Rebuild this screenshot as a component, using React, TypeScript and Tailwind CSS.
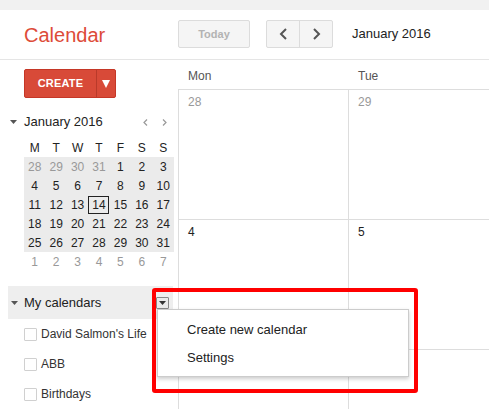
const prevDays = [28, 29, 30, 31];

function Tri({ className = '' }: { className?: string }) {
  return (
    <svg width="7" height="4" viewBox="0 0 7 4" className={className}>
      <path d="M0 0h7L3.5 4z" fill="currentColor" />
    </svg>
  );
}

function Chevron({ dir, size = 'lg' }: { dir: 'l' | 'r'; size?: 'lg' | 'sm' }) {
  if (size === 'sm') {
    return (
      <svg width="5" height="7" viewBox="0 0 5 7" className="text-[#999]">
        <path d={dir === 'l' ? 'M4 0.5L1 3.5L4 6.5' : 'M1 0.5L4 3.5L1 6.5'} stroke="currentColor" strokeWidth="1.2" fill="none" />
      </svg>
    );
  }
  return (
    <svg width="9" height="12" viewBox="0 0 9 12" className="text-[#555]">
      <path d={dir === 'l' ? 'M7 1L2 6L7 11' : 'M2 1L7 6L2 11'} stroke="currentColor" strokeWidth="2" fill="none" />
    </svg>
  );
}

function MiniCal() {
  // 6 weeks, Mon-first, Jan 2016
  const cells: { d: number; muted: boolean }[] = [];
  prevDays.forEach((d) => cells.push({ d, muted: true }));
  for (let d = 1; d <= 31; d++) cells.push({ d, muted: false });
  for (let d = 1; cells.length < 42; d++) cells.push({ d, muted: true });
  const weeks = Array.from({ length: 6 }, (_, i) => cells.slice(i * 7, i * 7 + 7));

  return (
    <div className="ml-[24px] w-[150px] text-[12px] leading-[14px]">
      <div className="grid h-[19px] grid-cols-7 items-center text-center text-[#222]">
        {['M', 'T', 'W', 'T', 'F', 'S', 'S'].map((l, i) => (
          <span key={i}>{l}</span>
        ))}
      </div>
      {weeks.map((w, wi) => (
        <div key={wi} className={`grid h-[19px] grid-cols-7 items-center text-center ${wi < 5 ? 'bg-[#ebebeb]' : ''}`}>
          {w.map((c, ci) => (
            <span key={ci} className="flex justify-center">
              {c.d === 14 && !c.muted ? (
                <span className="flex h-[18px] w-[21px] items-center justify-center border border-[#222]">{c.d}</span>
              ) : (
                <span className={c.muted ? 'text-[#999]' : 'text-[#222]'}>{c.d}</span>
              )}
            </span>
          ))}
        </div>
      ))}
    </div>
  );
}

// week rows of the month grid; the third row sits under the popup
const gridRows: { d: number | null; muted: boolean }[][] = [
  [
    { d: 28, muted: true },
    { d: 29, muted: true },
  ],
  [
    { d: 4, muted: false },
    { d: 5, muted: false },
  ],
  [
    { d: null, muted: false },
    { d: null, muted: false },
  ],
];

export default function App() {
  return (
    <div className="relative h-[409px] w-[489px] overflow-hidden bg-white font-['Liberation_Sans',Arial,sans-serif] text-[#222]">
      <div className="h-[10px] bg-[#f1f1f1]" />

      <header className="flex h-[50px] items-start border-b border-[#e5e5e5]">
        <div className="w-[178px] pl-[24px] pt-[13px] text-[20px] leading-[24px] text-[#dd4b39]">Calendar</div>
        <div className="mt-[10px] flex h-[28px] items-center">
          <div className="flex h-[28px] w-[72px] items-center justify-center rounded-[2px] border border-[#dcdcdc] bg-[#f5f5f5] text-[11px] font-bold text-[#b3b3b3]">
            Today
          </div>
          <div className="ml-[16px] flex h-[28px] w-[67px] rounded-[2px] border border-[#dcdcdc] bg-[#f5f5f5]">
            <div className="flex w-[33px] items-center justify-center border-r border-[#dcdcdc]">
              <Chevron dir="l" />
            </div>
            <div className="flex flex-1 items-center justify-center">
              <Chevron dir="r" />
            </div>
          </div>
          <div className="ml-[19px] text-[13px] text-[#222]">January 2016</div>
        </div>
      </header>

      <div className="flex">
        <aside className="w-[178px] shrink-0">
          <div className="ml-[24px] mt-[9px] flex h-[29px] w-[92px] rounded-[2px] border border-[#c53727] bg-[#d84a38] text-white">
            <div className="flex w-[71px] items-center justify-center text-[11px] font-bold tracking-[0.2px]">CREATE</div>
            <div className="w-px bg-[#b93a2a]" />
            <div className="flex flex-1 items-center justify-center">
              <svg width="8" height="8" viewBox="0 0 8 8">
                <path d="M0 0h8L4 8z" fill="white" />
              </svg>
            </div>
          </div>

          <div className="relative mt-[16px] flex h-[16px] items-center">
            <Tri className="ml-[10px] mr-[7px] text-[#555]" />
            <span className="text-[13px] leading-[16px]">January 2016</span>
            <div className="ml-auto mr-[11px] flex items-center gap-[14px]">
              <Chevron dir="l" size="sm" />
              <Chevron dir="r" size="sm" />
            </div>
          </div>

          <div className="mt-[8px]">
            <MiniCal />
          </div>

          <div className="ml-[8px] mt-[15px] flex h-[33px] w-[165px] items-center bg-[#eeeeee]">
            <Tri className="ml-[3px] mr-[6px] text-[#555]" />
            <span className="text-[13px]">My calendars</span>
            <div className="ml-auto mr-[4px] flex h-[12px] w-[13px] items-center justify-center rounded-[1px] border border-[#888] bg-[#eaeaea]">
              <Tri className="text-[#333]" />
            </div>
          </div>

          {["David Salmon's Life", 'ABB', 'Birthdays'].map((c) => (
            <div key={c} className="flex h-[30px] items-center pl-[24px] text-[12px] text-[#333]">
              <span className="h-[13px] w-[13px] rounded-[1px] border border-[#d0d0d0] bg-white" />
              <span className="ml-[4px] whitespace-nowrap">{c}</span>
            </div>
          ))}
        </aside>

        <main className="flex-1 overflow-hidden">
          <div className="flex h-[29px] text-[12px] leading-[14px] text-[#555]">
            <div className="w-[170px] shrink-0 pl-[10px] pt-[9px]">Mon</div>
            <div className="w-[170px] shrink-0 pl-[10px] pt-[9px]">Tue</div>
          </div>
          {gridRows.map((row, ri) => (
            <div key={ri} className="flex">
              {row.map((c, ci) => (
                <div
                  key={ci}
                  className={`h-[130px] w-[170px] shrink-0 border-l border-t border-[#dddddd] pl-[9px] pt-[5px] text-[12px] leading-[14px] ${c.muted ? 'text-[#999]' : 'text-[#222]'}`}
                >
                  {c.d}
                </div>
              ))}
            </div>
          ))}
        </main>
      </div>

      <div className="absolute left-[157px] top-[309px] h-[68px] w-[252px] border border-[#cccccc] bg-white pt-[6px] shadow-[0_2px_4px_rgba(0,0,0,0.2)]">
        <div className="flex h-[28px] items-center pl-[29px] text-[13px] text-[#222]">Create new calendar</div>
        <div className="flex h-[28px] items-center pl-[29px] text-[13px] text-[#222]">Settings</div>
      </div>

      <div className="pointer-events-none absolute left-[152px] top-[288px] h-[105px] w-[266px] rounded-[3px] border-4 border-[#ff0000]" />
    </div>
  );
}
